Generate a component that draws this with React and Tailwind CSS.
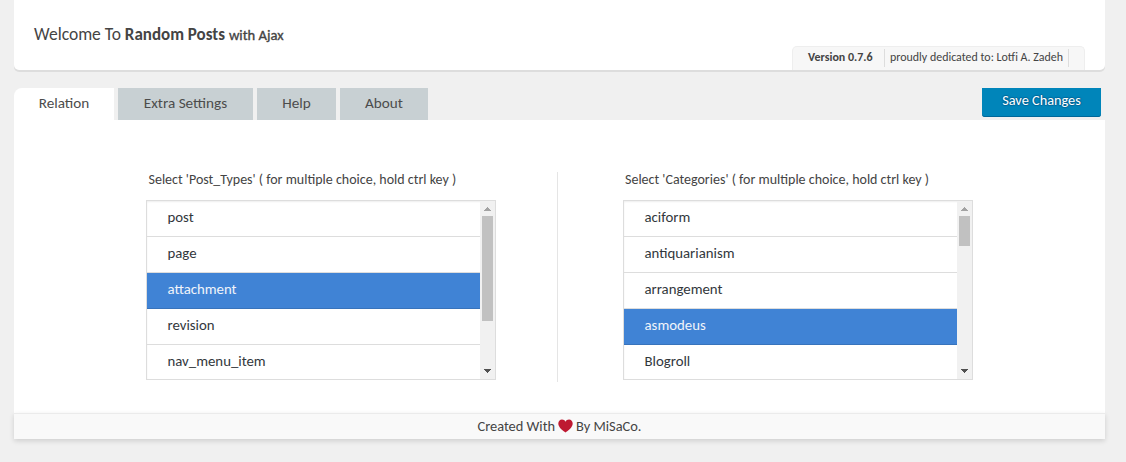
const TABS = [
  { label: 'Relation', box: 'w-[100px] bg-white rounded-tl-[8px]' },
  { label: 'Extra Settings', box: 'w-[135px] bg-[#c8d0d3]' },
  { label: 'Help', box: 'w-[79px] bg-[#c8d0d3]' },
  { label: 'About', box: 'w-[88px] bg-[#c8d0d3]' },
];

function ListBox({ items, selected, thumb }) {
  return (
    <div className="flex h-[180px] w-[350px] border border-[#dddddd] bg-white shadow-[inset_0_1px_2px_rgba(0,0,0,0.07)]">
      <ul className="h-[178px] flex-1 overflow-hidden text-[14.8px] leading-[32px] text-[#32373c]">
        {items.map((item) => (
          <li
            key={item}
            className={
              item === selected
                ? 'h-9 border-b border-[#3873bb] bg-[#4083d5] pl-[20.5px] text-[#f0f4fa]'
                : 'h-9 border-b border-[#dddddd] pl-[20.5px]'
            }
          >
            {item}
          </li>
        ))}
      </ul>
      <div className="flex w-[15px] flex-col items-center bg-[#f1f1f1]">
        <svg className="h-[15px] w-[15px] shrink-0" viewBox="0 0 15 15" shapeRendering="crispEdges">
          <path d="M7 6h1v1h1v1h1v1h1v1H4V9h1V8h1V7h1z" fill="#a3a3a3" />
        </svg>
        <div className={thumb} />
        <svg className="mt-auto h-[15px] w-[15px] shrink-0" viewBox="0 0 15 15" shapeRendering="crispEdges">
          <path d="M4 5h7v1h-1v1H9v1H8v1H7V8H6V7H5V6H4z" fill="#505050" />
        </svg>
      </div>
    </div>
  );
}

export default function App() {
  return (
    <div className="h-[462px] overflow-hidden bg-[#f0f0f0] pr-[21px] pl-[14px] font-['Carlito','Lato',sans-serif] text-[#444444]">
      <header className="flex h-[70px] justify-between rounded-b-[5px] bg-white pl-[20px] shadow-[0_2px_0_#dddddd]">
        <h1 className="pt-[23px] text-[17px] leading-[22px] whitespace-nowrap">
          <span className="text-[17.5px]">Welcome To</span>{' '}
          <b>Random Posts</b>{' '}
          <span className="text-[14.6px] [-webkit-text-stroke:0.35px_#444444]">with Ajax</span>
        </h1>
        <div className="mt-[46px] mr-[20px] flex h-6 w-[293px] rounded-t-[5px] border border-b-0 border-[#eeeeee] bg-[#f7f7f7] pt-[2px] text-[12px] leading-[17px] whitespace-nowrap">
          <b className="h-[18px] w-[92px] border-r border-[#dddddd] pl-[15px]">Version 0.7.6</b>
          <span className="h-[18px] w-[184px] border-r border-[#dddddd] pl-[5px] text-[11.95px]">proudly dedicated to: Lotfi A. Zadeh</span>
        </div>
      </header>

      <nav className="mt-[18px] flex h-8 gap-1 text-[15.2px] text-[#4c4c4c]">
        {TABS.map((tab) => (
          <button key={tab.label} className={`h-8 pb-px leading-[31px] whitespace-nowrap ${tab.box}`}>
            {tab.label}
          </button>
        ))}
        <button className="mr-1 ml-auto h-[29px] w-[119px] rounded-b-[3px] bg-[#0085ba] pb-[4px] text-[14.3px] leading-[25px] whitespace-nowrap text-white shadow-[inset_0_-1px_0_#006799] [text-shadow:0_-1px_1px_#006799,1px_0_1px_#006799,0_1px_1px_#006799,-1px_0_1px_#006799]">
          Save Changes
        </button>
      </nav>

      <div className="[clip-path:inset(0_-10px_-12px_-10px)]">
        <main className="flex h-[293px] bg-white pt-[52px] pl-[132px]">
          <section className="h-[210px] w-[412px] border-r border-[#e5e5e5]">
            <h2 className="h-[28px] pl-[2.5px] text-[14px] leading-[16px] whitespace-nowrap">
              Select 'Post_Types' ( for multiple choice, hold ctrl key )
            </h2>
            <ListBox
              items={['post', 'page', 'attachment', 'revision', 'nav_menu_item']}
              selected="attachment"
              thumb="h-[105px] w-[11px] bg-[#c1c1c1]"
            />
          </section>
          <section className="ml-[65px]">
            <h2 className="h-[28px] pl-[2px] text-[14px] leading-[16px] whitespace-nowrap">
              Select 'Categories' ( for multiple choice, hold ctrl key )
            </h2>
            <ListBox
              items={['aciform', 'antiquarianism', 'arrangement', 'asmodeus', 'Blogroll']}
              selected="asmodeus"
              thumb="h-[30px] w-[11px] bg-[#c1c1c1]"
            />
          </section>
        </main>
        <footer className="flex h-[26px] items-center justify-center gap-[3px] border-t border-[#ebebeb] bg-[#f9f9f9] text-[14.4px] shadow-[0_2px_5px_rgba(0,0,0,0.14)]">
          <span>Created With</span>
          <svg className="mb-px h-[14px] w-[15px]" viewBox="0 0 15 14">
            <path d="M7.5 13.4C5.2 12 .3 8.6.3 4.6.3 2.300 1.900.6 4 .6c1.500 0 2.900.9 3.500 2.200C8.100 1.500 9.500.6 11 .6c2.100 0 3.700 1.700 3.700 4 0 4-4.900 7.400-7.200 8.800z" fill="#be1931" />
          </svg>
          <span>By MiSaCo.</span>
        </footer>
      </div>
    </div>
  );
}
